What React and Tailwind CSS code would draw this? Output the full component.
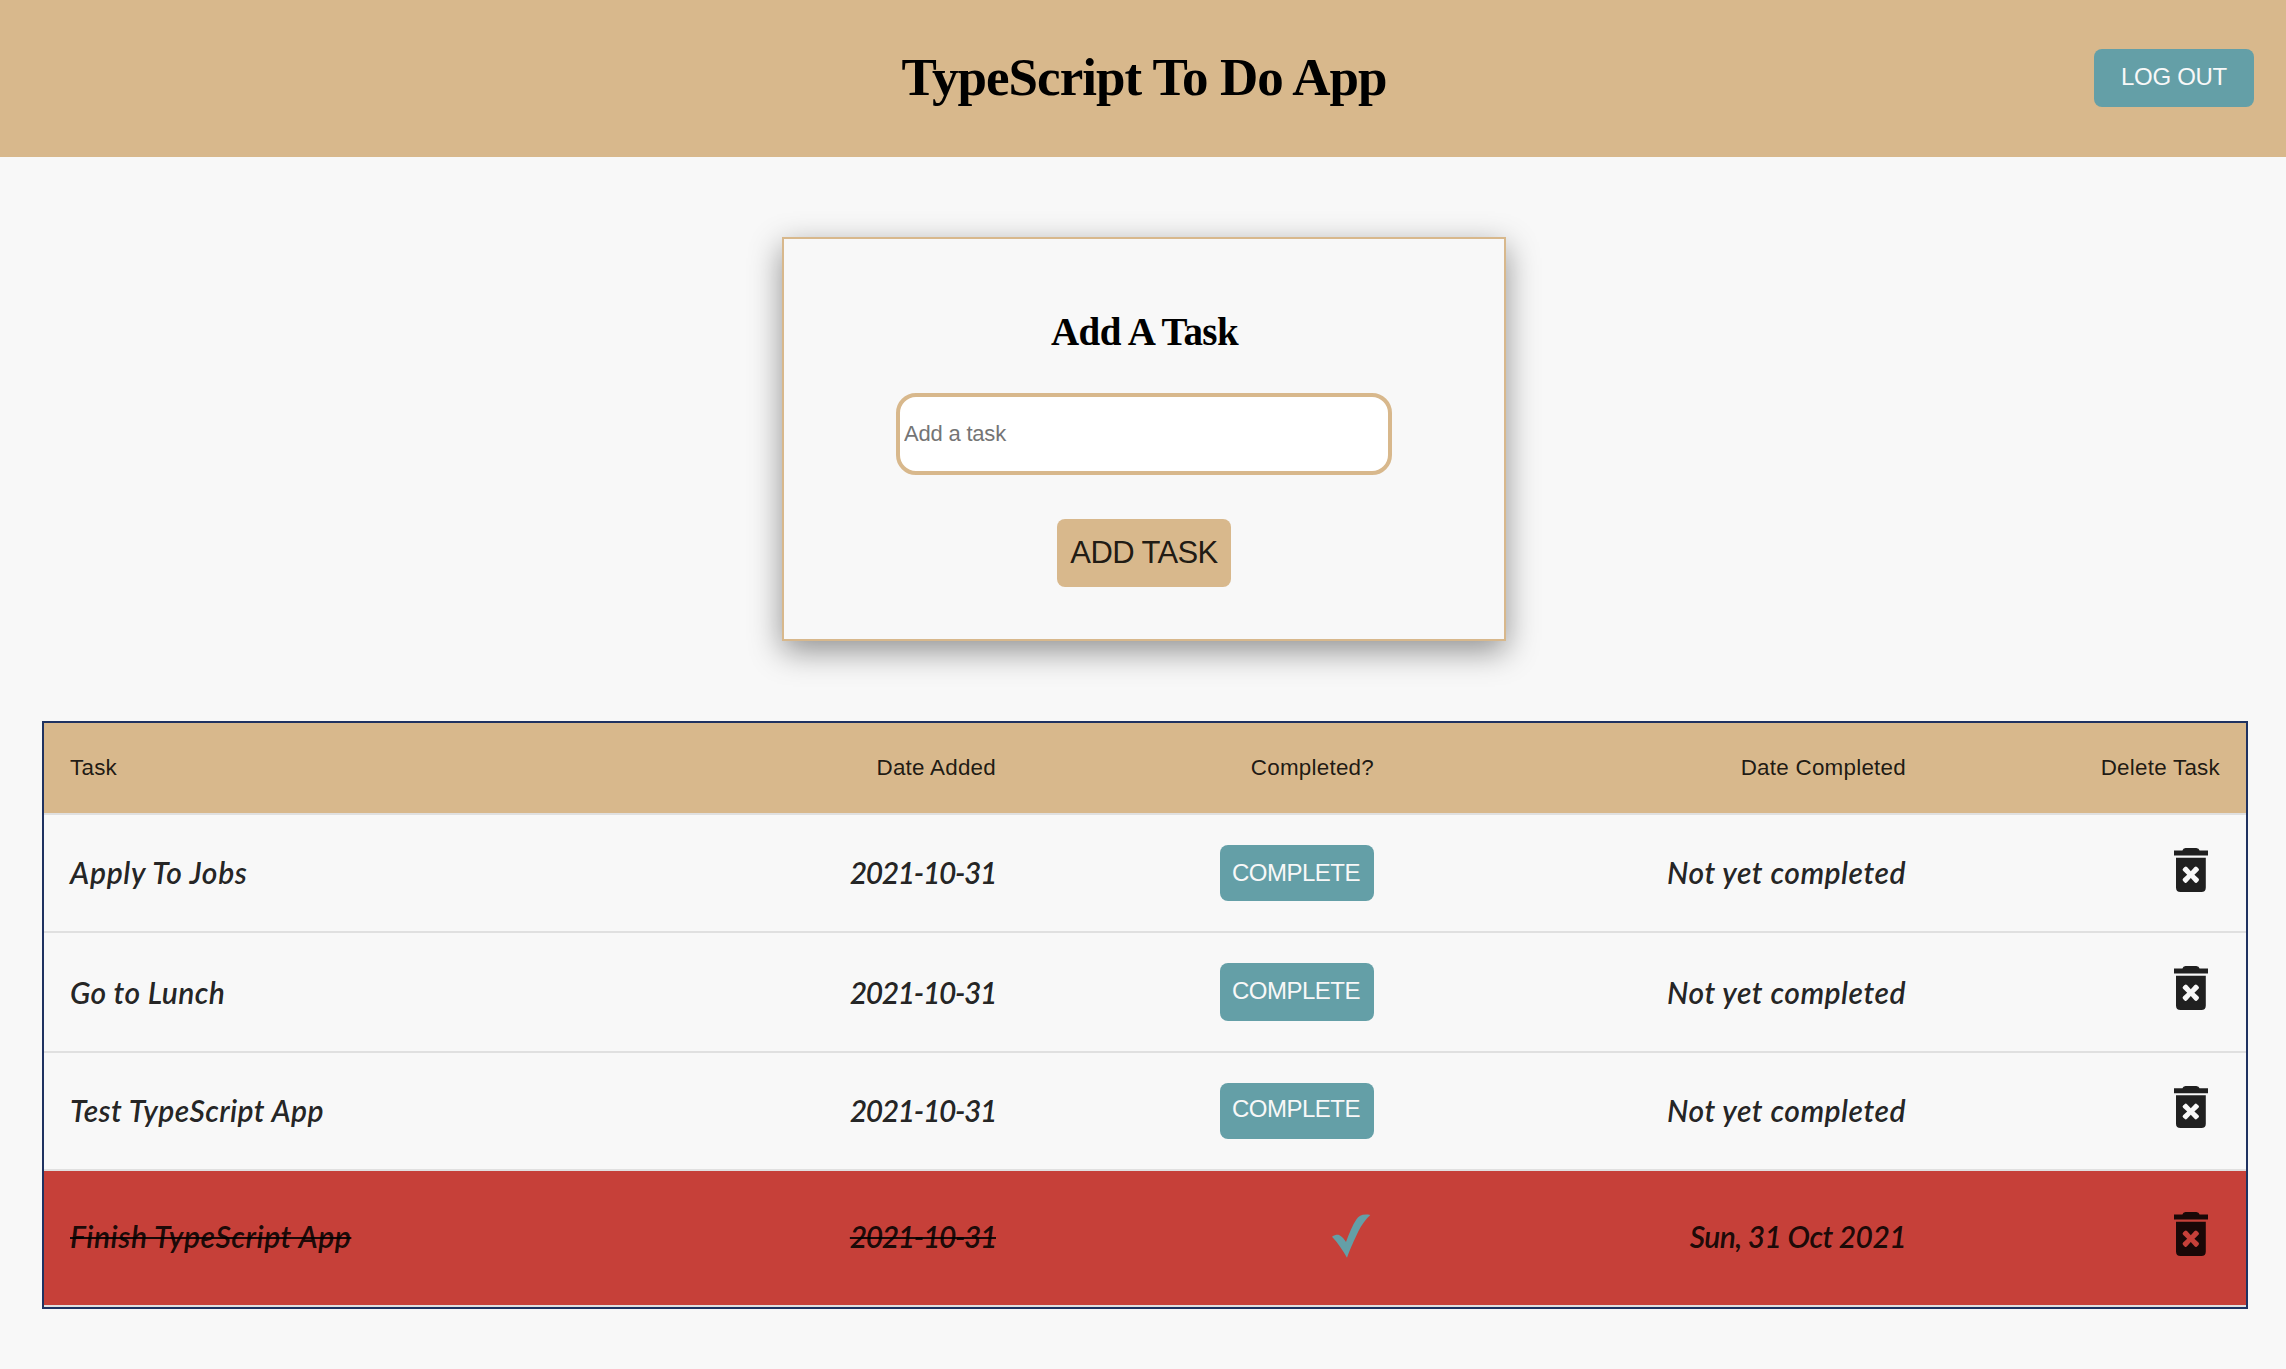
const COLUMNS =
  "grid grid-cols-[700px_278px_378px_532px_314px] items-center border-b-2 border-[#e0e0e0]";

const tasks = [
  {
    name: "Apply To Jobs",
    nameClass: "tracking-[0.7px]",
    added: "2021-10-31",
    row: "h-[118px]",
    text: "pb-0.5",
    button: "h-14 pb-px",
    icon: "h-11 mb-[6px]",
  },
  {
    name: "Go to Lunch",
    nameClass: "tracking-[0.4px]",
    added: "2021-10-31",
    row: "h-[120px]",
    text: "",
    button: "h-[58px] pb-[3px]",
    icon: "h-11 mb-2",
  },
  {
    name: "Test TypeScript App",
    nameClass: "tracking-[0.4px]",
    added: "2021-10-31",
    row: "h-[118px]",
    text: "pb-0.5",
    button: "h-14 pb-1",
    icon: "h-[42px] mb-2",
  },
  {
    name: "Finish TypeScript App",
    nameClass: "tracking-[0.55px]",
    added: "2021-10-31",
    completed: "Sun, 31 Oct 2021",
    row: "h-[136px] bg-[#c64039] bg-clip-padding",
    text: "pb-1",
    icon: "h-11 mb-2",
  },
];

function TrashIcon({ className }) {
  return (
    <svg
      viewBox="0 0 34 44"
      preserveAspectRatio="none"
      className={`w-[34px] fill-current ${className}`}
      aria-hidden="true"
    >
      <path d="M11.5 0H22.3Q25 .5 25.6 2.4H34V7.5H0V2.4H8.4Q9 .5 11.5 0Z" />
      <path
        fillRule="evenodd"
        d="M2 9.7H31.8V39.5Q31.8 44 27.3 44H6.5Q2 44 2 39.5ZM16.8 23.3L13 19.1Q11.8 17.8 10.6 19L9.1 20.5Q8 21.7 9.1 22.8L13.2 26.7L9.1 30.6Q8 31.8 9.1 33L10.6 34.4Q11.8 35.6 13 34.3L16.8 30.1L20.6 34.3Q21.8 35.6 23 34.4L24.5 33Q25.6 31.8 24.5 30.6L20.4 26.7L24.5 22.8Q25.6 21.7 24.5 20.5L23 19Q21.8 17.8 20.6 19.1Z"
      />
    </svg>
  );
}

function CheckIcon() {
  return (
    <svg viewBox="0 0 39 44" className="mr-[3px] mb-1 h-11 w-[39px] fill-[#649fa7]" aria-label="Completed">
      <path d="M0 22.7C3 20.8 5.5 20.3 7.5 21.2C10 22.4 12.3 25 14 28C17 19.5 20.5 11 24.5 5.2C27 1.2 31-.3 38.3.9C34 5 29.5 10.5 26.5 17C22 26.5 19 33 15 43.7C10.5 36 6 29 0 22.7Z" />
    </svg>
  );
}

function Header() {
  return (
    <header className="grid h-[157px] grid-cols-[1fr_auto_1fr] items-center bg-[#d8b88c] px-8">
      <div />
      <h1 className="pb-px pl-0.5 font-['Liberation_Serif',serif] text-[53px] font-bold tracking-[-0.95px] whitespace-nowrap">
        TypeScript To Do App
      </h1>
      <button className="mb-0.5 flex h-[58px] w-40 items-center justify-center justify-self-end rounded-lg bg-[#649fa7] pb-0.5 text-2xl tracking-[-0.3px] text-[#f8f8f8]">
        LOG OUT
      </button>
    </header>
  );
}

function AddTaskCard() {
  return (
    <form className="mt-20 ml-[782px] flex h-[404px] w-[724px] flex-col items-center border-2 border-[#d8b88c] bg-[#f8f8f8] pt-[69px] shadow-[0_10px_30px_rgba(0,0,0,0.42)]">
      <h2 className="pl-px font-['Liberation_Serif',serif] text-[39px] leading-[48px] font-bold tracking-[-0.6px]">
        Add A Task
      </h2>
      <input
        type="text"
        placeholder="Add a task"
        className="mt-[37px] h-[82px] w-[496px] shrink-0 rounded-[20px] border-4 border-[#d8b88c] bg-white px-1 text-[22px] tracking-[-0.2px] placeholder:text-[#757575]"
      />
      <button
        type="button"
        className="mt-11 flex h-[68px] w-[174px] items-center justify-center rounded-lg bg-[#d8b88c] text-[31px] tracking-[-0.6px] whitespace-nowrap text-black/87"
      >
        ADD TASK
      </button>
    </form>
  );
}

function TaskRow({ task }) {
  const done = Boolean(task.completed);
  const strike = done ? "line-through decoration-2" : "";
  return (
    <div
      className={`${COLUMNS} ${task.row} font-[Lato,sans-serif] text-[30px] font-semibold whitespace-nowrap italic text-black/87`}
    >
      <div className={`pl-[26px] ${task.text}`}>
        <span className={`${task.nameClass} ${strike}`}>{task.name}</span>
      </div>
      <div className={`pr-[26px] text-right ${task.text}`}>
        <span className={`tracking-[-1.4px] ${strike}`}>{task.added}</span>
      </div>
      <div className="flex justify-end pr-[26px]">
        {done ? (
          <CheckIcon />
        ) : (
          <button
            className={`${task.button} flex w-[154px] items-center justify-center rounded-lg bg-[#649fa7] pr-0.5 font-['Liberation_Sans',Arial,sans-serif] text-2xl font-normal tracking-[-0.5px] not-italic text-[#f8f8f8]`}
          >
            COMPLETE
          </button>
        )}
      </div>
      <div className={`pr-[26px] text-right ${task.text}`}>
        <span className={done ? "tracking-[-0.6px]" : "tracking-[0.5px]"}>
          {task.completed ?? "Not yet completed"}
        </span>
      </div>
      <div className="flex justify-end pr-[38px]">
        <TrashIcon className={task.icon} />
      </div>
    </div>
  );
}

function TaskTable() {
  return (
    <section className="mt-20 ml-[42px] w-[2206px] border-2 border-[#1f3261]">
      <div
        className={`${COLUMNS} h-[92px] bg-[#d8b88c] bg-clip-padding text-[22.4px] tracking-[0.25px] text-black/87`}
      >
        <div className="pl-[26px]">Task</div>
        <div className="pr-[26px] text-right">Date Added</div>
        <div className="pr-[26px] text-right">Completed?</div>
        <div className="pr-[26px] text-right">Date Completed</div>
        <div className="pr-[26px] text-right">Delete Task</div>
      </div>
      {tasks.map((task) => (
        <TaskRow key={task.name} task={task} />
      ))}
    </section>
  );
}

export default function App() {
  return (
    <main className="flow-root min-h-screen bg-[#f8f8f8] font-['Liberation_Sans',Arial,sans-serif] text-black">
      <Header />
      <AddTaskCard />
      <TaskTable />
    </main>
  );
}
